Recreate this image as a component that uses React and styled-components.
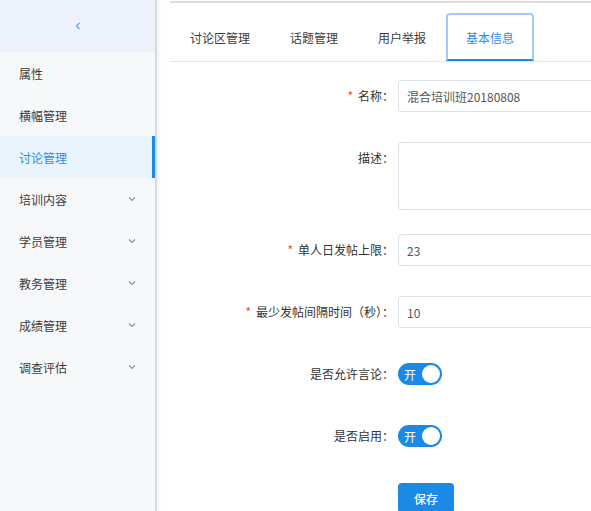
import styled, { createGlobalStyle } from "styled-components";

const GlobalStyle = createGlobalStyle`
  html, body {
    margin: 0;
    padding: 0;
    background: #fff;
    font-family: "Noto Sans CJK SC", "Noto Sans", sans-serif;
    font-size: 12px;
    color: #333;
  }
  #root {
    height: 511px;
    overflow: hidden;
  }
`;

const Layout = styled.div`
  display: flex;
  height: 511px;
`;

const Sidebar = styled.aside`
  width: 155px;
  flex-shrink: 0;
  background: #f7f8fa;
  box-shadow: 1px 0 0 #d3d6dc, 2px 0 0 #dcdfe4, 4px 0 4px rgba(0, 0, 0, 0.06);
  position: relative;
  z-index: 1;
`;

const Collapse = styled.div`
  height: 52px;
  background: #eef3fb;
  display: flex;
  align-items: center;
  justify-content: center;
`;

const MenuItem = styled.div`
  height: 42px;
  display: flex;
  align-items: center;
  justify-content: space-between;
  padding: 0 19px 0 19px;
  color: ${(p) => (p.$active ? "#2f8ce8" : "#3c3c3c")};
  background: ${(p) => (p.$active ? "#eaf4fd" : "transparent")};
  box-shadow: ${(p) => (p.$active ? "inset -3px 0 0 #1a8ae6" : "none")};
`;

const Main = styled.main`
  flex: 1;
  padding-left: 15px;
  min-width: 0;
`;

const Panel = styled.div`
  margin-top: 1px;
  border-top: 2px solid #dcdcdc;
`;

const TabBar = styled.div`
  display: flex;
  padding-top: 10px;
  border-bottom: 1px solid #e6e6e6;
`;

const Tab = styled.div`
  height: 48px;
  box-sizing: border-box;
  padding: 0 20px;
  display: flex;
  align-items: center;
  color: #3c3c3c;

  &.active {
    padding: 0 18px;
    color: #2f8ce8;
    border: 2px solid #a6c9fb;
    border-bottom-color: #1a8ae6;
    border-radius: 4px 4px 0 0;
  }
`;

const Form = styled.form`
  padding-top: 18px;
`;

const Row = styled.div`
  display: flex;
  align-items: flex-start;
  margin-bottom: ${(p) => p.$gap}px;
`;

const Label = styled.label`
  width: 224px;
  flex-shrink: 0;
  text-align: right;
  line-height: 32px;
  padding-right: 4px;
  color: #333;
  white-space: nowrap;
`;

const Star = styled.span`
  color: #f0443c;
  margin-right: 5px;
`;

const Input = styled.input`
  width: 320px;
  flex-shrink: 0;
  height: 32px;
  box-sizing: border-box;
  border: 1px solid #dcdfe6;
  border-radius: 4px;
  padding: 0 8px;
  font: inherit;
  font-size: 12px;
  color: #555;
  outline: none;
`;

const TextArea = styled.textarea`
  width: 320px;
  flex-shrink: 0;
  height: 68px;
  box-sizing: border-box;
  border: 1px solid #dcdfe6;
  border-radius: 4px;
  padding: 6px 8px;
  font: inherit;
  resize: none;
  outline: none;
`;

const Control = styled.div`
  height: 32px;
  display: flex;
  align-items: center;
`;

const Switch = styled.div`
  width: 44px;
  height: 22px;
  box-sizing: border-box;
  border-radius: 11px;
  background: #1a8ae6;
  display: flex;
  align-items: center;
  justify-content: space-between;
  padding: 0 2px 0 6px;
  color: #fff;
  font-size: 12px;
`;

const Knob = styled.span`
  width: 18px;
  height: 18px;
  border-radius: 50%;
  background: #fff;
`;

const Button = styled.button`
  width: 56px;
  height: 30px;
  border: none;
  border-radius: 4px;
  background: #1a8ae6;
  color: #fff;
  font: inherit;
  font-size: 12px;
  font-weight: 500;
  margin-left: 228px;
  margin-top: 1px;
`;

const Chevron = () => (
  <svg width="8" height="6" viewBox="0 0 8 6">
    <path d="M1 1.5 L4 4.5 L7 1.5" fill="none" stroke="#8a8f99" strokeWidth="1.2" />
  </svg>
);

const menus = [
  { name: "属性" },
  { name: "横幅管理" },
  { name: "讨论管理", active: true },
  { name: "培训内容", sub: true },
  { name: "学员管理", sub: true },
  { name: "教务管理", sub: true },
  { name: "成绩管理", sub: true },
  { name: "调查评估", sub: true },
];

const tabs = ["讨论区管理", "话题管理", "用户举报", "基本信息"];

export default function App() {
  return (
    <>
      <GlobalStyle />
      <Layout>
        <Sidebar>
          <Collapse>
            <svg width="6" height="8" viewBox="0 0 6 8">
              <path d="M4.5 1 L1.5 4 L4.5 7" fill="none" stroke="#5b9cf2" strokeWidth="1.2" />
            </svg>
          </Collapse>
          {menus.map((m) => (
            <MenuItem key={m.name} $active={m.active}>
              <span>{m.name}</span>
              {m.sub && <Chevron />}
            </MenuItem>
          ))}
        </Sidebar>
        <Main>
          <Panel>
            <TabBar>
              {tabs.map((t, i) => (
                <Tab key={t} className={i === 3 ? "active" : undefined}>
                  {t}
                </Tab>
              ))}
            </TabBar>
            <Form onSubmit={(e) => e.preventDefault()}>
              <Row $gap={30}>
                <Label>
                  <Star>*</Star>名称：
                </Label>
                <Input defaultValue="混合培训班20180808" />
              </Row>
              <Row $gap={24}>
                <Label>描述：</Label>
                <TextArea />
              </Row>
              <Row $gap={30}>
                <Label>
                  <Star>*</Star>单人日发帖上限：
                </Label>
                <Input defaultValue="23" />
              </Row>
              <Row $gap={30}>
                <Label>
                  <Star>*</Star>最少发帖间隔时间（秒）：
                </Label>
                <Input defaultValue="10" />
              </Row>
              <Row $gap={30}>
                <Label>是否允许言论：</Label>
                <Control>
                  <Switch>
                    开<Knob />
                  </Switch>
                </Control>
              </Row>
              <Row $gap={30}>
                <Label>是否启用：</Label>
                <Control>
                  <Switch>
                    开<Knob />
                  </Switch>
                </Control>
              </Row>
              <Button type="submit">保存</Button>
            </Form>
          </Panel>
        </Main>
      </Layout>
    </>
  );
}
